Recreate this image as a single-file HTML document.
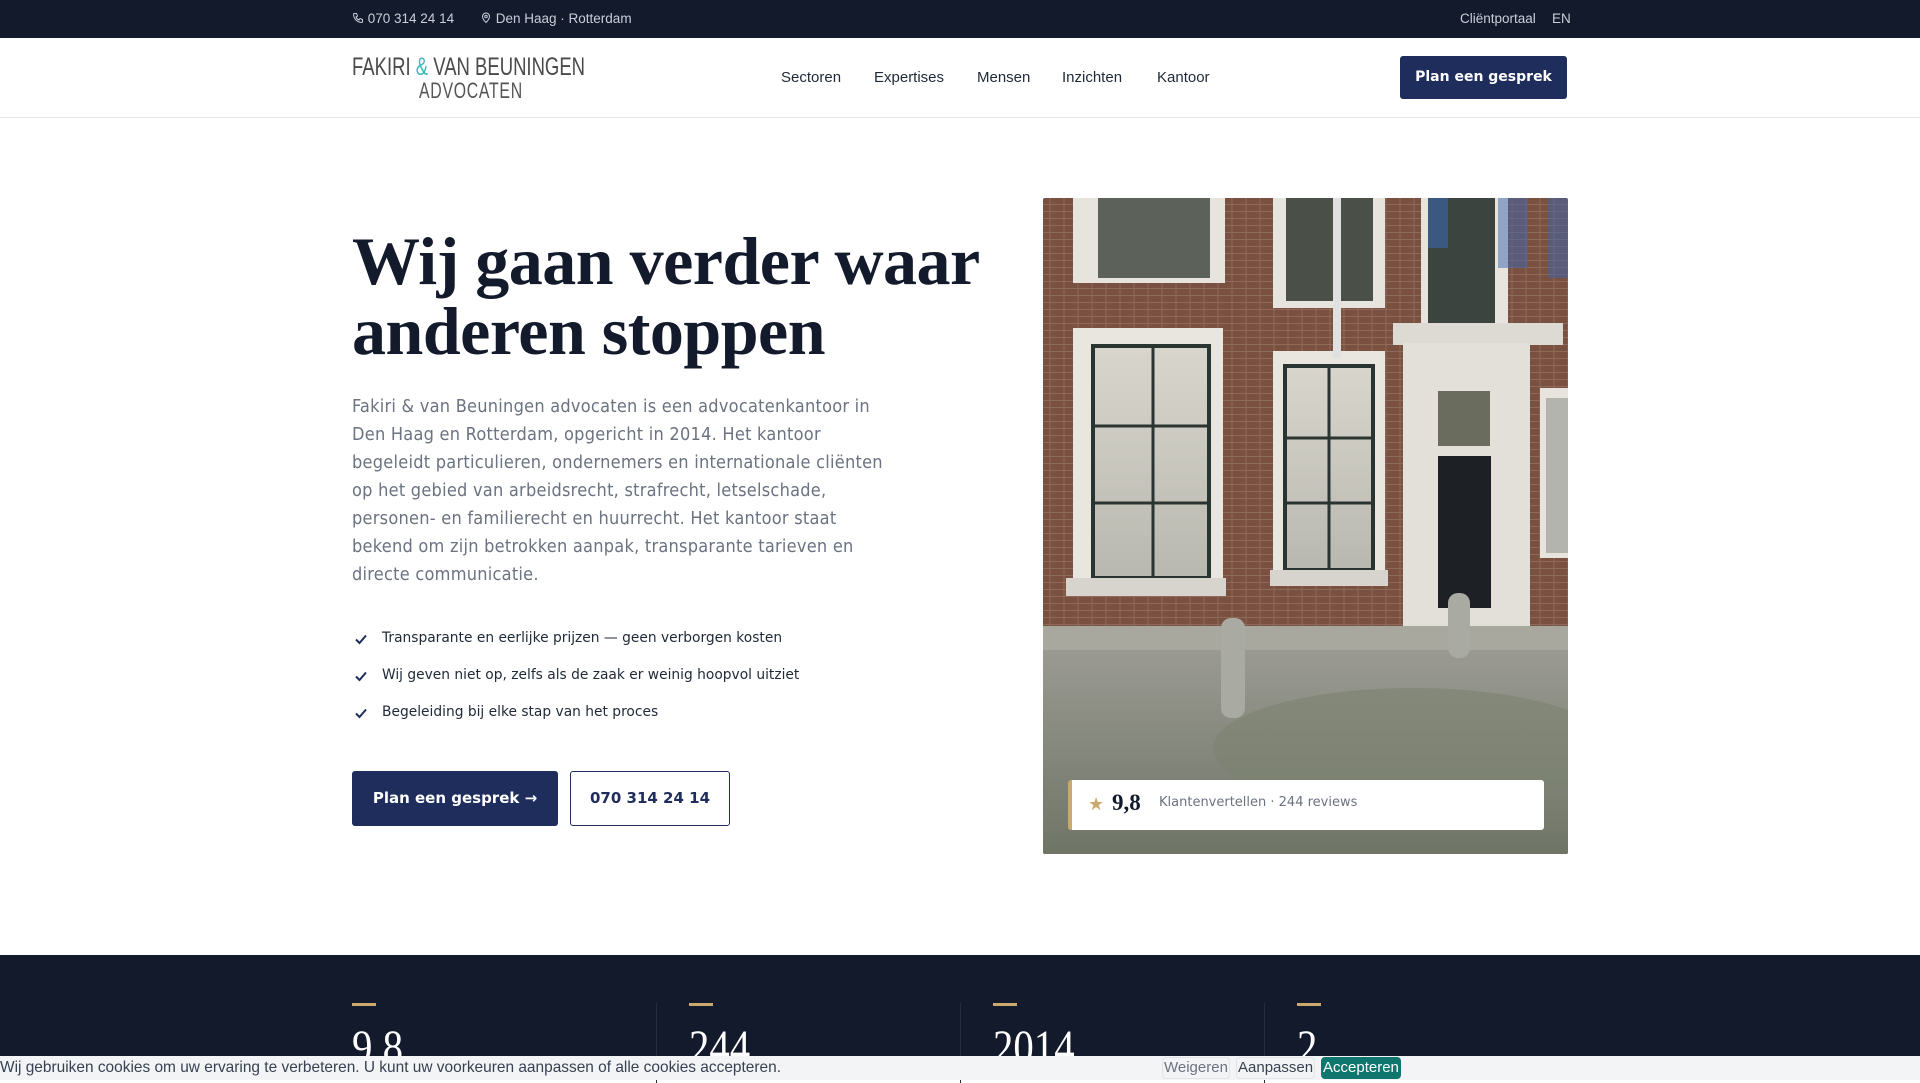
<!DOCTYPE html>
<html><head><meta charset="utf-8"><style>
*{box-sizing:border-box;margin:0;padding:0}
body{width:1920px;height:1080px;overflow:hidden;background:#fff;font-family:"Liberation Sans",sans-serif;position:relative}
.top{position:absolute;left:0;top:0;width:1920px;height:38px;background:#131a2b;color:#c9ced8;font-size:13.5px}
.top span{position:absolute;top:11px}
.hdr{position:absolute;left:0;top:38px;width:1920px;height:80px;border-bottom:1px solid #e5e7eb;background:#fff}
.logo1{position:absolute;left:352px;top:15px;font-family:"Liberation Sans",sans-serif;font-size:25px;color:#4a4a4a;white-space:nowrap;transform:scaleX(.74);transform-origin:left}
.logo2{position:absolute;left:419px;top:40px;font-family:"Liberation Sans",sans-serif;font-size:22px;color:#555;letter-spacing:1px;transform:scaleX(.72);transform-origin:left}
.nav{position:absolute;top:31px;font-size:15px;color:#1f2937}
.btn{position:absolute;left:1400px;top:18px;width:167px;height:43px;background:#1f2d5c;color:#fff;border-radius:3px;font-weight:bold;font-size:14px;text-align:center;line-height:43px;font-family:"DejaVu Sans",sans-serif}
h1{position:absolute;left:352px;top:226px;font-family:"Liberation Serif",serif;font-weight:600;font-size:68px;line-height:70px;color:#131a2b;letter-spacing:-0.5px}
.p{position:absolute;left:352px;top:393px;font-family:"DejaVu Sans Condensed","DejaVu Sans",sans-serif;font-size:18px;letter-spacing:0.25px;line-height:28px;color:#6b7280}
.li{position:absolute;left:352px;font-family:"DejaVu Sans",sans-serif;font-size:13.8px;color:#1f2937}
.li svg{position:absolute;left:2px;top:3px}
.li span{margin-left:30px}
.b1{position:absolute;left:352px;top:771px;width:206px;height:55px;background:#1f2d5c;color:#fff;border-radius:3px;font:bold 15px "DejaVu Sans",sans-serif;text-align:center;line-height:55px}
.b2{position:absolute;left:570px;top:771px;width:160px;height:55px;border:1.5px solid #1f2d5c;color:#1f2d5c;border-radius:3px;font:bold 15px "DejaVu Sans",sans-serif;text-align:center;line-height:52px}
.img{position:absolute;left:1043px;top:198px;width:525px;height:656px;overflow:hidden;border-radius:2px}
.card{position:absolute;left:1068px;top:780px;width:476px;height:50px;background:#fff;border-left:4px solid #c9a96e;border-radius:3px}
.dark{position:absolute;left:0;top:955px;width:1920px;height:125px;background:#131a2b}
.stat{position:absolute;top:1003px}
.stat i{display:block;width:24px;height:3px;background:#c9a96e}
.stat div{font-family:"Liberation Serif",serif;font-size:48px;color:#fff;margin-top:14px;transform:scaleX(.85);transform-origin:left}
.vl{position:absolute;top:1003px;width:1px;height:80px;background:#252d40}
.ck{position:absolute;left:0;top:1056px;width:1920px;height:24px;background:#f3f4f6;font-family:"Liberation Sans",sans-serif;font-size:16px;color:#374151}
.ck .t{position:absolute;left:0;top:3px;transform:scaleX(.965);transform-origin:left;white-space:nowrap}
.ck .x{position:absolute;top:1px;height:22px;border:1px solid #e2e4e8;border-radius:4px;line-height:20px;padding:0 1px;font-size:15px}
</style></head><body>
<div class="top">
<span style="left:352px"><svg width="12" height="12" viewBox="0 0 24 24" fill="none" stroke="#c9ced8" stroke-width="2" style="vertical-align:-1px"><path d="M5 3h4l2 5-3 2a11 11 0 0 0 6 6l2-3 5 2v4a2 2 0 0 1-2 2A17 17 0 0 1 3 5a2 2 0 0 1 2-2"/></svg> 070 314 24 14</span>
<span style="left:480px"><svg width="12" height="13" viewBox="0 0 24 24" fill="none" stroke="#c9ced8" stroke-width="2" style="vertical-align:-1px"><path d="M12 22s7-7 7-12a7 7 0 0 0-14 0c0 5 7 12 7 12z"/><circle cx="12" cy="10" r="2.5"/></svg> Den Haag · Rotterdam</span>
<span style="left:1460px">Cliëntportaal</span><span style="left:1552px">EN</span>
</div>
<div class="hdr">
<div class="logo1">FAKIRI <span style="color:#3bb8bd">&amp;</span> VAN BEUNINGEN</div>
<div class="logo2">ADVOCATEN</div>
<span class="nav" style="left:781px">Sectoren</span>
<span class="nav" style="left:874px">Expertises</span>
<span class="nav" style="left:977px">Mensen</span>
<span class="nav" style="left:1062px">Inzichten</span>
<span class="nav" style="left:1157px">Kantoor</span>
<div class="btn">Plan een gesprek</div>
</div>
<h1>Wij gaan verder waar<br>anderen stoppen</h1>
<div class="p">Fakiri &amp; van Beuningen advocaten is een advocatenkantoor in<br>Den Haag en Rotterdam, opgericht in 2014. Het kantoor<br>begeleidt particulieren, ondernemers en internationale cliënten<br>op het gebied van arbeidsrecht, strafrecht, letselschade,<br>personen- en familierecht en huurrecht. Het kantoor staat<br>bekend om zijn betrokken aanpak, transparante tarieven en<br>directe communicatie.</div>
<div class="li" style="top:630px"><svg width="14" height="12" viewBox="0 0 14 12"><path d="M2 6.5l3.5 3.5L12 2.5" fill="none" stroke="#1f2d5c" stroke-width="2"/></svg><span>Transparante en eerlijke prijzen — geen verborgen kosten</span></div>
<div class="li" style="top:667px"><svg width="14" height="12" viewBox="0 0 14 12"><path d="M2 6.5l3.5 3.5L12 2.5" fill="none" stroke="#1f2d5c" stroke-width="2"/></svg><span>Wij geven niet op, zelfs als de zaak er weinig hoopvol uitziet</span></div>
<div class="li" style="top:704px"><svg width="14" height="12" viewBox="0 0 14 12"><path d="M2 6.5l3.5 3.5L12 2.5" fill="none" stroke="#1f2d5c" stroke-width="2"/></svg><span>Begeleiding bij elke stap van het proces</span></div>
<div class="b1">Plan een gesprek →</div>
<div class="b2">070 314 24 14</div>
<div class="img"><svg width="525" height="656" viewBox="0 0 525 656">
<defs><pattern id="br" width="14" height="7" patternUnits="userSpaceOnUse"><rect width="14" height="7" fill="#7a5040"/><path d="M0 6.5h14M7 0v6.5" stroke="#8d6a5a" stroke-width="1"/></pattern>
<linearGradient id="gl" x1="0" y1="0" x2="0" y2="1"><stop offset="0" stop-color="#d8d6cc"/><stop offset="1" stop-color="#b9b8b0"/></linearGradient>
<linearGradient id="pv" x1="0" y1="0" x2="0" y2="1"><stop offset="0" stop-color="#9a9a92"/><stop offset="1" stop-color="#6f7566"/></linearGradient></defs>
<rect width="525" height="656" fill="url(#br)"/>
<rect x="30" y="0" width="152" height="85" fill="#e6e4dc"/><rect x="55" y="0" width="112" height="80" fill="#5c625a"/>
<rect x="230" y="0" width="112" height="110" fill="#e6e4dc"/><rect x="243" y="0" width="87" height="103" fill="#4a5048"/>
<rect x="378" y="0" width="87" height="128" fill="#e6e4dc"/><rect x="385" y="0" width="67" height="125" fill="#3c4440"/>
<rect x="30" y="130" width="150" height="258" fill="#e8e6de"/><rect x="50" y="148" width="116" height="232" fill="url(#gl)" stroke="#2a3430" stroke-width="4"/><path d="M110 148v232M50 228h116M50 305h116" stroke="#2a3430" stroke-width="3"/><rect x="23" y="380" width="160" height="18" fill="#d6d4cc"/>
<rect x="230" y="153" width="112" height="232" fill="#e8e6de"/><rect x="242" y="168" width="88" height="204" fill="url(#gl)" stroke="#2a3430" stroke-width="4"/><path d="M286 168v204M242 240h88M242 305h88" stroke="#2a3430" stroke-width="3"/><rect x="227" y="372" width="118" height="16" fill="#d6d4cc"/>
<rect x="290" y="0" width="8" height="160" fill="#e0e0e0"/>
<rect x="350" y="125" width="170" height="22" fill="#dcdad2"/>
<rect x="360" y="145" width="127" height="285" fill="#e2e0d8"/><rect x="395" y="193" width="52" height="55" fill="#6a6c5e"/><rect x="395" y="258" width="53" height="152" fill="#1d2126"/>
<rect x="497" y="190" width="28" height="170" fill="#e6e4dc"/><rect x="503" y="200" width="22" height="155" fill="#b4b4ae"/>
<rect x="385" y="0" width="20" height="50" fill="#3a66b0" opacity=".6"/><rect x="455" y="0" width="30" height="70" fill="#3a66b0" opacity=".5"/><rect x="505" y="0" width="20" height="80" fill="#3a66b0" opacity=".5"/>
<rect x="0" y="428" width="525" height="28" fill="#a8a89e"/>
<rect x="0" y="452" width="525" height="204" fill="url(#pv)"/>
<rect x="178" y="420" width="24" height="100" rx="10" fill="#a9aaa2"/><rect x="405" y="395" width="22" height="65" rx="10" fill="#a9aaa2"/>
<ellipse cx="370" cy="550" rx="200" ry="60" fill="#7c8270" opacity=".6"/>
</svg></div>
<div class="card"><span style="position:absolute;left:16px;top:14px;color:#c9a96e;font-size:18px">★</span><span style="position:absolute;left:40px;top:10px;font:bold 23px 'Liberation Serif',serif;color:#131a2b">9,8</span><span style="position:absolute;left:87px;top:15px;font:13px 'DejaVu Sans',sans-serif;color:#6b7280">Klantenvertellen · 244 reviews</span></div>
<div class="dark"></div>
<div class="vl" style="left:656px"></div><div class="vl" style="left:960px"></div><div class="vl" style="left:1264px"></div>
<div class="stat" style="left:352px"><i></i><div>9.8</div></div>
<div class="stat" style="left:689px"><i></i><div>244</div></div>
<div class="stat" style="left:993px"><i></i><div>2014</div></div>
<div class="stat" style="left:1297px"><i></i><div>2</div></div>
<div class="ck"><span class="t">Wij gebruiken cookies om uw ervaring te verbeteren. U kunt uw voorkeuren aanpassen of alle cookies accepteren.</span>
<span class="x" style="left:1162px;color:#6b7280">Weigeren</span><span class="x" style="left:1236px">Aanpassen</span><span class="x" style="left:1321px;background:#0f766e;color:#fff;border-color:#0f766e">Accepteren</span></div>
</body></html>
